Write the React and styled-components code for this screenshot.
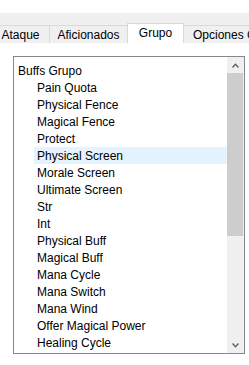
import styled, { createGlobalStyle } from "styled-components";

const GlobalStyle = createGlobalStyle`
  html, body {
    margin: 0;
    padding: 0;
    background: #ffffff;
  }
  body {
    font-family: "Liberation Sans", Arial, sans-serif;
    font-size: 12px;
    color: #000000;
  }
`;

const tabs = [
  { label: "Ataque", width: 59, offset: -9 },
  { label: "Aficionados", width: 79 },
  { label: "Grupo", width: 57, active: true },
  { label: "Opciones Grupo", width: 90 },
];

const buffs = [
  "Pain Quota",
  "Physical Fence",
  "Magical Fence",
  "Protect",
  "Physical Screen",
  "Morale Screen",
  "Ultimate Screen",
  "Str",
  "Int",
  "Physical Buff",
  "Magical Buff",
  "Mana Cycle",
  "Mana Switch",
  "Mana Wind",
  "Offer Magical Power",
  "Healing Cycle",
];

export default function App() {
  return (
    <>
      <GlobalStyle />
      <Window>
        <TabStrip>
          {tabs.map((t) => (
            <Tab
              key={t.label}
              $active={t.active}
              $width={t.width}
              $offset={t.offset}
            >
              {t.label}
            </Tab>
          ))}
        </TabStrip>
        <Page>
          <ListBox>
            <Items>
              <GroupHeading>Buffs Grupo</GroupHeading>
              {buffs.map((b) => (
                <Item key={b} $selected={b === "Physical Screen"}>
                  {b}
                </Item>
              ))}
            </Items>
            <ScrollBar>
              <ArrowButton>
                <Chevron up />
              </ArrowButton>
              <Track>
                <Thumb />
              </Track>
              <ArrowButton>
                <Chevron />
              </ArrowButton>
            </ScrollBar>
          </ListBox>
        </Page>
      </Window>
    </>
  );
}

function Chevron({ up }) {
  return (
    <svg width="7" height="5" viewBox="0 0 7 5">
      <path
        d={up ? "M0.5 4.5 L3.5 1.2 L6.5 4.5" : "M0.5 0.5 L3.5 3.8 L6.5 0.5"}
        fill="none"
        stroke="#606060"
        strokeWidth="1.4"
      />
    </svg>
  );
}

const Window = styled.div`
  width: 249px;
  height: 365px;
  padding-top: 13px;
  box-sizing: border-box;
  overflow: hidden;
`;

const TabStrip = styled.div`
  display: flex;
  align-items: flex-end;
  height: 30px;
  background: #f0f0f0;
  overflow: hidden;
  white-space: nowrap;
`;

const Tab = styled.div`
  flex: 0 0 auto;
  box-sizing: border-box;
  width: ${(p) => p.$width}px;
  height: ${(p) => (p.$active ? 20 : 18)}px;
  margin-left: ${(p) => (p.$offset !== undefined ? p.$offset : -1)}px;
  border: 1px solid #d9d9d9;
  border-bottom: none;
  background: ${(p) => (p.$active ? "#ffffff" : "#f0f0f0")};
  position: relative;
  z-index: ${(p) => (p.$active ? 1 : 0)};
  display: flex;
  align-items: center;
  justify-content: center;
  padding-bottom: ${(p) => (p.$active ? 2 : 0)}px;
  line-height: 14px;
  &:last-child {
    justify-content: flex-start;
    padding-left: 9px;
  }
`;

const Page = styled.div`
  padding: 13px 0 0 13px;
`;

const ListBox = styled.div`
  box-sizing: border-box;
  width: 232px;
  height: 298px;
  border: 1px solid #828790;
  display: flex;
  background: #ffffff;
`;

const Items = styled.div`
  flex: 1;
  padding-top: 5px;
  overflow: hidden;
`;

const GroupHeading = styled.div`
  height: 17px;
  line-height: 19px;
  padding-left: 4px;
`;

const Item = styled.div`
  height: 17px;
  line-height: 19px;
  margin-left: 20px;
  padding-left: 3px;
  background: ${(p) => (p.$selected ? "#e5f3ff" : "transparent")};
`;

const ScrollBar = styled.div`
  width: 17px;
  display: flex;
  flex-direction: column;
  background: #f0f0f0;
`;

const ArrowButton = styled.div`
  height: 16px;
  display: flex;
  align-items: center;
  justify-content: center;
`;

const Track = styled.div`
  flex: 1;
  display: flex;
  flex-direction: column;
`;

const Thumb = styled.div`
  height: 163px;
  margin: 0 1px 0 0;
  background: #cdcdcd;
`;
